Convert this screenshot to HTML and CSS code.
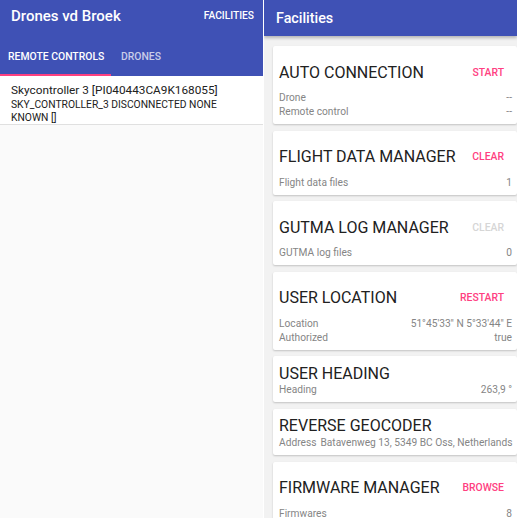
FILE: index.html
```html
<!DOCTYPE html>
<html>
<head>
<meta charset="utf-8">
<link rel="stylesheet" href="styles.css">
</head>
<body>
<div class="screen">
  <div class="left">
    <div class="appbar">
      <div class="toolbar">
        <span class="apptitle">Drones vd Broek</span>
        <span class="action">FACILITIES</span>
      </div>
      <div class="tabs">
        <div class="tab active">REMOTE CONTROLS</div>
        <div class="tab">DRONES</div>
      </div>
    </div>
    <div class="list">
      <div class="item">
        <div class="item-title">Skycontroller 3 [PI040443CA9K168055]</div>
        <div class="item-sub">SKY_CONTROLLER_3 DISCONNECTED NONE KNOWN []</div>
      </div>
    </div>
  </div>
  <div class="sep"></div>
  <div class="right">
    <div class="rbar">Facilities</div>
    <div class="cards">
      <div class="card">
        <div class="card-head"><span class="card-title">AUTO CONNECTION</span><span class="btn">START</span></div>
        <div class="row"><span>Drone</span><span>--</span></div>
        <div class="row"><span>Remote control</span><span>--</span></div>
      </div>
      <div class="card">
        <div class="card-head"><span class="card-title">FLIGHT DATA MANAGER</span><span class="btn">CLEAR</span></div>
        <div class="row"><span>Flight data files</span><span>1</span></div>
      </div>
      <div class="card">
        <div class="card-head"><span class="card-title">GUTMA LOG MANAGER</span><span class="btn disabled">CLEAR</span></div>
        <div class="row"><span>GUTMA log files</span><span>0</span></div>
      </div>
      <div class="card">
        <div class="card-head"><span class="card-title">USER LOCATION</span><span class="btn">RESTART</span></div>
        <div class="row"><span>Location</span><span>51°45'33" N 5°33'44" E</span></div>
        <div class="row"><span>Authorized</span><span>true</span></div>
      </div>
      <div class="card small">
        <div class="card-head small"><span class="card-title">USER HEADING</span></div>
        <div class="row"><span>Heading</span><span>263,9 °</span></div>
      </div>
      <div class="card small">
        <div class="card-head small"><span class="card-title">REVERSE GEOCODER</span></div>
        <div class="row"><span>Address</span><span>Batavenweg 13, 5349 BC Oss, Netherlands</span></div>
      </div>
      <div class="card">
        <div class="card-head"><span class="card-title">FIRMWARE MANAGER</span><span class="btn">BROWSE</span></div>
        <div class="row"><span>Firmwares</span><span>8</span></div>
      </div>
    </div>
  </div>
</div>
</body>
</html>
```
FILE: styles.css
```css
* { box-sizing: border-box; }
html, body { margin: 0; padding: 0; }
body {
  font-family: Roboto, "Noto Sans", sans-serif;
  width: 517px;
  height: 518px;
  overflow: hidden;
  background: #fafafa;
}
.screen {
  display: flex;
  height: 518px;
}
.left {
  width: 263px;
  flex: none;
  background: #fafafa;
}
.sep {
  width: 1px;
  flex: none;
  background: #ffffff;
}
.appbar {
  background: #3f51b5;
  color: #fff;
  height: 76px;
  display: flex;
  flex-direction: column;
}
.toolbar {
  height: 31px;
  display: flex;
  align-items: center;
  justify-content: space-between;
  padding: 0 9px 0 11px;
}
.apptitle {
  font-size: 15px;
  font-weight: 500;
}
.action {
  font-size: 10.2px;
  font-weight: 500;
}
.tabs {
  margin-top: auto;
  display: flex;
  height: 40px;
}
.tab {
  font-size: 10.4px;
  font-weight: 500;
  color: rgba(255,255,255,0.72);
  padding: 2px 8px 0 10px;
  display: flex;
  align-items: center;
  white-space: nowrap;
  border-bottom: 2px solid transparent;
}
.tab.active {
  color: #fff;
  width: 111px;
  padding-left: 8px;
  border-bottom-color: #ff4081;
}
.item {
  background: #fff;
  padding: 6px 8px 0 11px;
  border-bottom: 1px solid #e0e0e0;
  color: #212121;
}
.item-title {
  font-size: 11.8px;
  line-height: 16px;
}
.item-sub {
  font-size: 10.3px;
  line-height: 13px;
}
.right {
  flex: 1;
  background: #f2f2f2;
  display: flex;
  flex-direction: column;
  overflow: hidden;
}
.rbar {
  background: #3f51b5;
  color: #fff;
  height: 36px;
  flex: none;
  padding-left: 12px;
  display: flex;
  align-items: center;
  font-size: 14.3px;
  font-weight: 500;
  box-shadow: 0 2px 3px rgba(0,0,0,0.25);
  position: relative;
  z-index: 1;
}
.cards {
  padding: 10px 0 0 9px;
  display: flex;
  flex-direction: column;
  gap: 6.6px;
}
.card {
  background: #fff;
  border-radius: 2px;
  box-shadow: 0 1px 2px rgba(0,0,0,0.2);
  padding: 8px 5px 5px 6px;
  flex: none;
}
.card.small {
  padding-top: 7px;
}
.card-head {
  height: 36px;
  display: flex;
  align-items: center;
  justify-content: space-between;
  margin-bottom: 1px;
}
.card-head.small {
  height: 20px;
  margin-bottom: 0;
}
.card-title {
  font-size: 16px;
  color: #212121;
  white-space: nowrap;
}
.btn {
  font-size: 10.4px;
  font-weight: 500;
  color: #ff4081;
  padding: 0 8px;
}
.btn.disabled {
  color: #d6d6d6;
}
.row {
  display: flex;
  justify-content: space-between;
  gap: 4px;
  font-size: 10.2px;
  line-height: 14px;
  color: #858585;
  white-space: nowrap;
}
```
